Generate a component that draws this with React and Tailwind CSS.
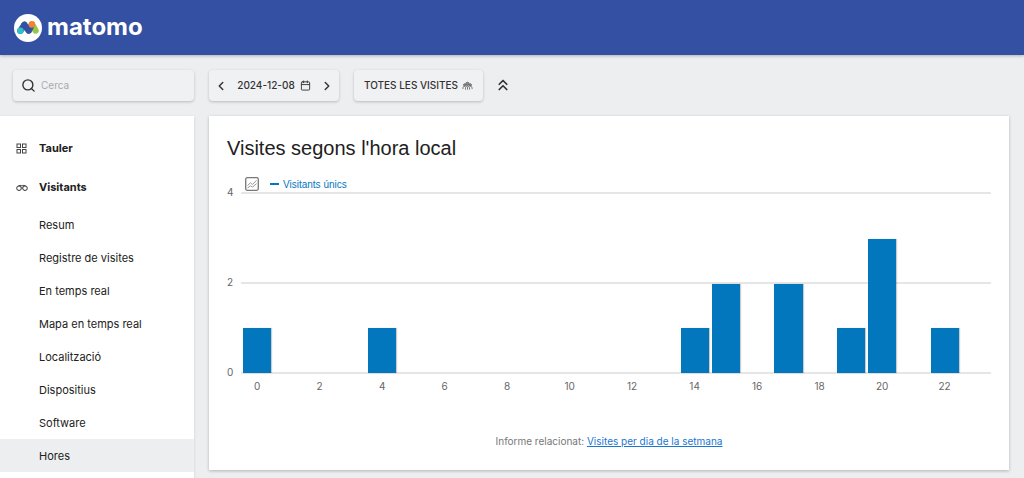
import React from "react";
import { Search, ChevronLeft, ChevronRight, ChevronsUp, Calendar } from "lucide-react";

const visits = [1, 0, 0, 0, 1, 0, 0, 0, 0, 0, 0, 0, 0, 0, 1, 2, 0, 2, 0, 1, 3, 0, 1, 0];
const maxVisits = 4;

const reports = [
  "Resum",
  "Registre de visites",
  "En temps real",
  "Mapa en temps real",
  "Localització",
  "Dispositius",
  "Software",
  "Hores",
];

function Logo() {
  return (
    <svg viewBox="0 0 28 28" className="size-7" aria-hidden="true">
      <circle cx="14" cy="14" r="14" fill="#fff" />
      <path d="M18 10.4 L21.6 16.6" stroke="#95c748" strokeWidth="6.2" strokeLinecap="round" />
      <path d="M6.4 16.8 L10.4 10.8" stroke="#3450a3" strokeWidth="6.2" strokeLinecap="round" />
      <path d="M10.4 10.8 L14.8 16.8 L17.4 11.5" fill="none" stroke="#3450a3" strokeWidth="6.2" strokeLinecap="round" strokeLinejoin="round" />
      <circle cx="6.4" cy="16.8" r="3.3" fill="#35bfc0" />
      <circle cx="17.9" cy="10.4" r="3.3" fill="#f38334" />
    </svg>
  );
}

function GridIcon() {
  return (
    <svg viewBox="0 0 11 11" className="size-[11px]" fill="none" stroke="#444" aria-hidden="true">
      <rect x="1" y="1" width="3.5" height="3.5" />
      <rect x="6.5" y="1" width="3.5" height="3.5" />
      <rect x="1" y="6.5" width="3.5" height="3.5" />
      <rect x="6.5" y="6.5" width="3.5" height="3.5" />
    </svg>
  );
}

function BinocularsIcon() {
  return (
    <svg viewBox="0 0 12 8" className="h-2 w-3" fill="none" stroke="#333" aria-hidden="true">
      <circle cx="3" cy="4.2" r="2.3" />
      <circle cx="9" cy="4.2" r="2.3" />
      <path d="M2.5 1.9 L5 1.3 L6 2.2 L7 1.3 L9.5 1.9 M5.3 4 H6.7" strokeWidth="0.9" />
    </svg>
  );
}

function PeopleIcon() {
  return (
    <svg viewBox="0 0 12 10" className="h-[10px] w-[11px]" fill="#888" stroke="#666" strokeWidth="0.9" aria-hidden="true">
      <circle cx="6" cy="2.6" r="1.8" />
      <circle cx="3" cy="3.8" r="1.3" />
      <circle cx="9" cy="3.8" r="1.3" />
      <path d="M3.8 9 V7 Q3.8 5 6 5 Q8.2 5 8.2 7 V9 M1 8.4 V7 Q1 5.3 3 5.4 M11 8.4 V7 Q11 5.3 9 5.4 M6 6 V9" fill="none" />
    </svg>
  );
}

function ChartIcon() {
  return (
    <svg viewBox="0 0 14 14" className="size-[14px]" fill="none" stroke="#777" aria-hidden="true">
      <rect x="0.7" y="0.7" width="12.6" height="12.6" rx="1.5" strokeWidth="1.3" />
      <path d="M2.5 8.5 L5.5 5.8 L7.3 7.5 L11.5 3.5 M2.5 11 L5.5 8.8 L7.5 10 L11.5 6.7" stroke="#999" />
    </svg>
  );
}

function Header() {
  return (
    <header className="flex h-[55px] items-center bg-[#3450a3] px-[14px] pt-px shadow-[0_1px_3px_rgba(0,0,0,0.25)]">
      <a href="#inici" className="flex items-center gap-[5px] text-white">
        <Logo />
        <span className="-mt-[2px] text-2xl font-bold leading-7">matomo</span>
      </a>
    </header>
  );
}

function Sidebar() {
  return (
    <nav className="flex-1 bg-white pt-4 shadow-[0_1px_3px_rgba(0,0,0,0.12)]">
      <a href="#tauler" className="flex h-[33px] items-center gap-3 pl-4 text-[11px] font-bold">
        <GridIcon />
        Tauler
      </a>
      <a href="#visitants" className="mt-[6px] flex h-[33px] items-center gap-[11px] pl-4 text-[11px] font-bold">
        <BinocularsIcon />
        Visitants
      </a>
      <ul className="mt-1">
        {reports.map((name) => (
          <li key={name}>
            <a
              href={"#" + name}
              aria-current={name === "Hores" ? "page" : undefined}
              className="flex h-[33px] items-center pt-px pl-[39px] text-[11px] aria-[current=page]:bg-[#edeef0]"
            >
              {name}
            </a>
          </li>
        ))}
      </ul>
    </nav>
  );
}

function Toolbar() {
  return (
    <div className="flex items-start gap-[15px] text-[#333]">
      <div className="flex h-[31px] w-[130px] items-center justify-between rounded-sm bg-[#f0f1f3] px-[5px] shadow-[0_1px_3px_rgba(0,0,0,0.22)]">
        <button type="button" aria-label="Dia anterior">
          <ChevronLeft className="size-[14px]" strokeWidth={2.5} />
        </button>
        <button type="button" className="flex items-center gap-[5px] text-[10px] font-medium">
          2024-12-08
          <Calendar className="size-[11px]" />
        </button>
        <button type="button" aria-label="Dia següent">
          <ChevronRight className="size-[14px]" strokeWidth={2.5} />
        </button>
      </div>
      <button
        type="button"
        className="flex h-[31px] w-[129px] items-center justify-center gap-1 rounded-sm bg-[#f0f1f3] text-[10px] font-medium whitespace-nowrap shadow-[0_1px_3px_rgba(0,0,0,0.22)]"
      >
        TOTES LES VISITES
        <PeopleIcon />
      </button>
      <button type="button" aria-label="Amaga els selectors" className="-ml-1 mt-[6px]">
        <ChevronsUp className="size-[18px]" strokeWidth={2.3} />
      </button>
    </div>
  );
}

function HoursChart() {
  return (
    <div className="grid grid-cols-[14px_1fr] text-[10px] leading-3 text-[#666]">
      <div className="flex h-[192px] flex-col justify-between">
        <span>4</span>
        <span>2</span>
        <span>0</span>
      </div>
      <div className="mt-[6px] grid h-[182px]">
        <div className="col-start-1 row-start-1 flex flex-col justify-between">
          <div className="h-[2px] bg-[#e6e6e6]" />
          <div className="h-[2px] bg-[#e6e6e6]" />
          <div className="h-[2px] bg-[#e6e6e6]" />
        </div>
        <div className="z-10 col-start-1 row-start-1 mt-[2px] mb-px flex items-end">
          {visits.map((count, hour) => (
            <div key={hour} className="flex h-full flex-1 items-end pr-px pl-[2px]">
              <div
                className="w-full bg-[#0277bd] shadow-[1px_0_1px_rgba(0,0,0,0.2)]"
                style={{ height: (count / maxVisits) * 100 + "%" }}
              />
            </div>
          ))}
        </div>
      </div>
      <div className="col-start-2 mt-[2px] flex">
        {visits.map((_, hour) => (
          <span key={hour} className="flex w-0 flex-1 justify-center pl-px">
            {hour % 2 === 0 ? hour : ""}
          </span>
        ))}
      </div>
    </div>
  );
}

function ReportCard() {
  return (
    <section className="bg-white px-[18px] pt-5 pb-[21px] shadow-[0_1px_3px_rgba(0,0,0,0.25)]">
      <h1 className="font-['Liberation_Sans',Arial,sans-serif] text-xl leading-6 text-[#212121]">
        Visites segons l'hora local
      </h1>
      <div className="mt-4 flex h-4 items-center pl-[18px]">
        <button type="button" aria-label="Tria les mètriques">
          <ChartIcon />
        </button>
        <span className="ml-[11px] h-[2px] w-[9px] bg-[#0277bd]" />
        <span className="ml-1 font-['Liberation_Sans',Arial,sans-serif] text-[10px] text-[#0277bd]">Visitants únics</span>
      </div>
      <div className="-mt-[6px]">
        <HoursChart />
      </div>
      <p className="mt-[41px] text-center text-[10px] leading-4 text-[#777]">
        Informe relacionat:{" "}
        <a href="#dies" className="text-[#1976d2] underline">
          Visites per dia de la setmana
        </a>
      </p>
    </section>
  );
}

export default function App() {
  return (
    <div className="flex min-h-screen flex-col bg-[#edeef0] font-['Inter','Liberation_Sans',sans-serif] text-[#212121]">
      <Header />
      <div className="flex flex-1 gap-[15px] pr-[15px] pt-[15px]">
        <aside className="flex w-[194px] shrink-0 flex-col gap-[15px]">
          <label className="ml-[13px] flex h-[31px] items-center gap-[5px] rounded-sm bg-[#f0f1f3] px-2 shadow-[0_1px_3px_rgba(0,0,0,0.22)]">
            <Search className="size-[15px] shrink-0 text-[#333]" strokeWidth={2.2} />
            <input
              type="search"
              aria-label="Cerca"
              placeholder="Cerca"
              className="w-full min-w-0 bg-transparent text-[10px] outline-none placeholder:text-[#aaa]"
            />
          </label>
          <Sidebar />
        </aside>
        <main className="flex min-w-0 flex-1 flex-col gap-[15px]">
          <Toolbar />
          <ReportCard />
        </main>
      </div>
    </div>
  );
}
